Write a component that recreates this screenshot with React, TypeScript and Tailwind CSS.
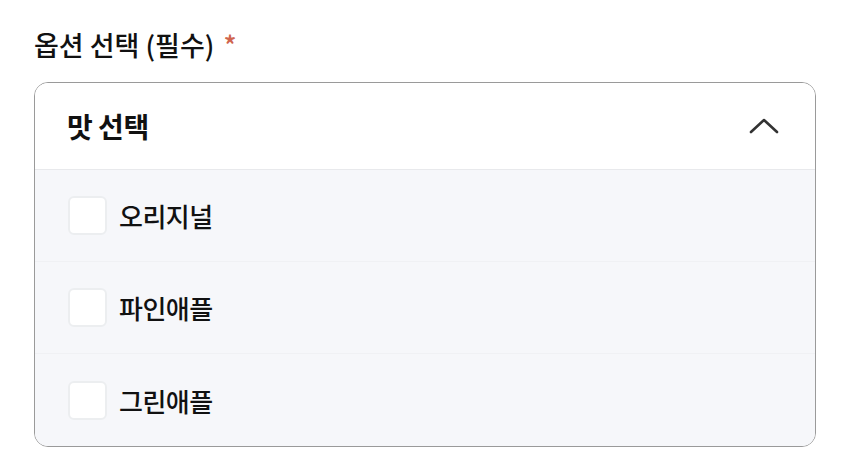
import { useState } from 'react';

const flavors = ['오리지널', '파인애플', '그린애플'];

export default function App() {
  const [open, setOpen] = useState(true);
  const [checked, setChecked] = useState<string[]>([]);

  const toggle = (name: string) => {
    setChecked((prev) =>
      prev.includes(name) ? prev.filter((n) => n !== name) : [...prev, name]
    );
  };

  return (
    <div className="h-[469px] w-[850px] bg-white px-[34px] pt-[24px] font-['Noto_Sans_CJK_KR','Noto_Sans',sans-serif] text-[#111]">
      <div className="flex h-[42px] items-center text-[27px] font-medium">
        <span>옵션 선택 (필수)</span>
        <span className="ml-[9px] text-[#d0654e]">*</span>
      </div>
      <div className="mt-[16px] overflow-hidden rounded-[14px] border border-[#9a9a9a]">
        <button
          type="button"
          onClick={() => setOpen(!open)}
          className="flex h-[87px] w-full items-center justify-between border-b border-[#e8e9ec] bg-white pl-[32px] pr-[36px]"
        >
          <span className="text-[28px] font-bold tracking-[-0.5px]">맛 선택</span>
          <svg
            width="30"
            height="18"
            viewBox="0 0 30 18"
            fill="none"
            stroke="#333"
            strokeWidth="2.6"
            strokeLinecap="round"
            strokeLinejoin="round"
            className={open ? '' : 'rotate-180'}
          >
            <path d="M2 15 L15 3 L28 15" />
          </svg>
        </button>
        {open && (
          <div className="bg-[#f6f7fa]">
            {flavors.map((f, i) => (
              <label
                key={f}
                className={`flex h-[92px] cursor-pointer items-center gap-[12px] pl-[33px] ${
                  i < flavors.length - 1 ? 'border-b border-[#f0f1f4]' : ''
                }`}
              >
                <input
                  type="checkbox"
                  checked={checked.includes(f)}
                  onChange={() => toggle(f)}
                  className="h-[39px] w-[39px] appearance-none rounded-[6px] border-2 border-[#eceef0] bg-white checked:bg-[#333]"
                />
                <span className="text-[26px] font-medium tracking-[-0.5px]">{f}</span>
              </label>
            ))}
          </div>
        )}
      </div>
    </div>
  );
}
